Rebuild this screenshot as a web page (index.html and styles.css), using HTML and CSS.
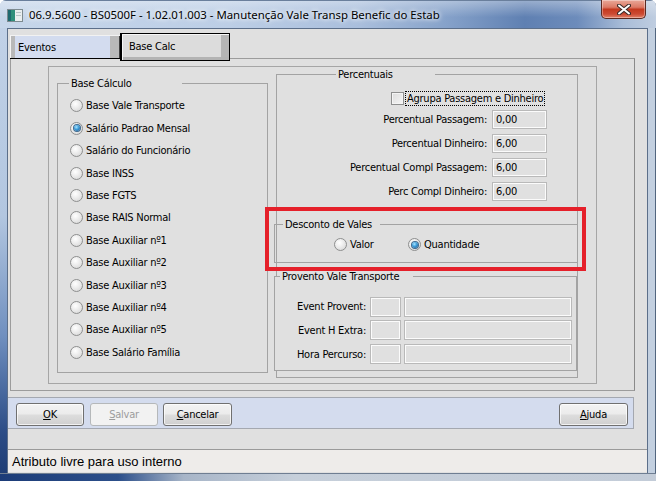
FILE: index.html
```html
<!DOCTYPE html>
<html lang="pt">
<head>
<meta charset="utf-8">
<title>Manutenção Vale Transp</title>
<link rel="stylesheet" href="styles.css">
</head>
<body>
<div class="window">
  <div class="titlebar">
    <svg class="app-icon" width="16" height="13" viewBox="0 0 16 13">
      <rect x="0.5" y="0.5" width="15" height="12" fill="#e9eef0" stroke="#7d8a90"/>
      <rect x="1" y="1" width="7" height="11" fill="#2f8f7c"/>
      <rect x="1" y="1" width="3" height="11" fill="#1f6a70"/>
      <rect x="9" y="3" width="5" height="1" fill="#b8c4c8"/>
      <rect x="9" y="6" width="5" height="1" fill="#b8c4c8"/>
    </svg>
    <span class="title">06.9.5600 - BS0500F - 1.02.01.003 - Manutenção Vale Transp Benefic do Estab</span>
    <div class="close">
      <svg width="14" height="11" viewBox="0 0 14 11">
        <path d="M2 1.5 L12 9.5 M12 1.5 L2 9.5" stroke="#3a2a28" stroke-width="4" stroke-linecap="round"/>
        <path d="M2 1.5 L12 9.5 M12 1.5 L2 9.5" stroke="#ffffff" stroke-width="2" stroke-linecap="round"/>
      </svg>
    </div>
  </div>
  <div class="frame-mid">
    <div class="client">
      <div class="tabs">
        <div class="tab tab-off">Eventos</div>
        <div class="tab tab-on">Base Calc</div>
      </div>
      <div class="tabpanel">
        <div class="inner">
          <fieldset class="grp grp-base">
            <legend>Base Cálculo</legend>
            <div class="radio-list">
              <div class="radio"><span class="rb"></span>Base Vale Transporte</div>
              <div class="radio"><span class="rb on"></span>Salário Padrao Mensal</div>
              <div class="radio"><span class="rb"></span>Salário do Funcionário</div>
              <div class="radio"><span class="rb"></span>Base INSS</div>
              <div class="radio"><span class="rb"></span>Base FGTS</div>
              <div class="radio"><span class="rb"></span>Base RAIS Normal</div>
              <div class="radio"><span class="rb"></span>Base Auxiliar nº1</div>
              <div class="radio"><span class="rb"></span>Base Auxiliar nº2</div>
              <div class="radio"><span class="rb"></span>Base Auxiliar nº3</div>
              <div class="radio"><span class="rb"></span>Base Auxiliar nº4</div>
              <div class="radio"><span class="rb"></span>Base Auxiliar nº5</div>
              <div class="radio"><span class="rb"></span>Base Salário Família</div>
            </div>
          </fieldset>
          <fieldset class="grp grp-perc">
            <legend>Percentuais</legend>
            <div class="chk-row"><span class="cb"></span><span class="chk-label">Agrupa Passagem e Dinheiro</span></div>
            <div class="prow"><span class="plabel">Percentual Passagem:</span><span class="field pinput">0,00</span></div>
            <div class="prow"><span class="plabel">Percentual Dinheiro:</span><span class="field pinput">6,00</span></div>
            <div class="prow"><span class="plabel">Percentual Compl Passagem:</span><span class="field pinput">6,00</span></div>
            <div class="prow"><span class="plabel">Perc Compl Dinheiro:</span><span class="field pinput">6,00</span></div>
            <div class="highlight">
              <fieldset class="grp grp-desc">
                <legend>Desconto de Vales</legend>
                <div class="desc-row">
                  <div class="radio opt-valor"><span class="rb"></span>Valor</div>
                  <div class="radio"><span class="rb on"></span>Quantidade</div>
                </div>
              </fieldset>
            </div>
            <fieldset class="grp grp-prov">
              <legend>Provento Vale Transporte</legend>
              <div class="vrow"><span class="vlabel">Event Provent:</span><span class="field vsmall"></span><span class="field vbig"></span></div>
              <div class="vrow"><span class="vlabel">Event H Extra:</span><span class="field vsmall"></span><span class="field vbig"></span></div>
              <div class="vrow"><span class="vlabel">Hora Percurso:</span><span class="field vsmall"></span><span class="field vbig"></span></div>
            </fieldset>
          </fieldset>
        </div>
      </div>
      <div class="buttonbar">
        <button class="btn"><u>O</u>K</button>
        <button class="btn disabled"><u>S</u>alvar</button>
        <button class="btn"><u>C</u>ancelar</button>
        <button class="btn help"><u>A</u>juda</button>
      </div>
      <div class="statusbar">Atributo livre para uso interno</div>
    </div>
  </div>
  <div class="frame-bottom"></div>
</div>
</body>
</html>
```

FILE: styles.css
```css
* { box-sizing: border-box; }
html, body { margin: 0; padding: 0; }
body {
  width: 656px;
  height: 481px;
  overflow: hidden;
  background: #ffffff;
  font-family: "DejaVu Sans Condensed", "Liberation Sans", sans-serif;
  font-size: 11px;
  letter-spacing: -0.25px;
  color: #000;
}

.window {
  width: 656px;
  height: 481px;
  display: flex;
  flex-direction: column;
  border-radius: 6px 6px 0 0;
  overflow: hidden;
  background:
    linear-gradient(to right, transparent 0 648px, #c3d0e0 648px 655px, #52667f 655px),
    linear-gradient(to bottom, #c3d3e8 0%, #b2c6e0 45%, #6f8fbf 70%, #2b4c86 90%, #1d3b72 100%);
}

/* title bar */
.titlebar {
  height: 28px;
  display: flex;
  align-items: center;
  flex: none;
  letter-spacing: 0;
  background:
    linear-gradient(to bottom, rgba(255,255,255,0.35), rgba(255,255,255,0) 60%),
    linear-gradient(to right, #c6d6ea 0%, #bccee6 35%, #a9bedc 55%, #86a2ca 68%, #5f80b2 80%, #6d8cbb 88%, #a9bdd8 95%, #bfcde0 100%);
  border-top: 1px solid #6a7f9c;
}
.app-icon { margin-left: 7px; margin-top: 2px; flex: none; }
.title {
  margin-left: 6px;
  font-family: "Noto Sans", "Open Sans", "Liberation Sans", sans-serif;
  font-size: 11.4px;
  color: #000;
  text-shadow: 0 0 4px #fff, 0 0 6px rgba(255,255,255,0.9);
  white-space: nowrap;
}
.close {
  margin-left: auto;
  margin-right: 10px;
  align-self: flex-start;
  margin-top: -1px;
  width: 45px;
  height: 19px;
  border: 1px solid #5b2a22;
  border-top: none;
  border-radius: 0 0 5px 5px;
  background: linear-gradient(to bottom, #e9a898 0%, #dc7a66 40%, #c4391f 52%, #cc4a33 78%, #e2826a 100%);
  display: flex;
  align-items: center;
  justify-content: center;
  box-shadow: inset 0 0 0 1px rgba(255,255,255,0.35);
}

.frame-mid {
  flex: 1;
  display: flex;
  padding-left: 7px;
  padding-right: 8px;
  min-height: 0;
}
.client {
  flex: 1;
  border: 1px solid #5c6f8a;
  border-bottom: none;
  background: #e0e0e0;
  display: flex;
  flex-direction: column;
}
.frame-bottom {
  height: 8px;
  flex: none;
  background: linear-gradient(to right, #1c3c78 0%, #2c4f8a 18%, #a7b5c8 28%, #c6cfda 45%, #c3ccd8 100%);
  border-top: 1px solid #6f7e92;
}

/* tabs */
.tabs {
  height: 30px;
  display: flex;
  align-items: flex-end;
  padding-left: 2px;
  flex: none;
}
.tab {
  position: relative;
  z-index: 1;
  display: flex;
  align-items: center;
}
.tab-off {
  width: 110px;
  height: 24px;
  padding-left: 8px;
  background: linear-gradient(to right, #f4f4f4 0 1px, #b9b9b9 1px 5px, #d3dcef 5px 100px, #b9b9b9 100px 109px, #404040 109px);
  border-top: 1px solid #f2f2f2;
  border-bottom: 1px solid #000;
}
.tab-on {
  width: 110px;
  height: 28px;
  margin-bottom: -2px;
  padding-left: 7px;
  padding-bottom: 2px;
  border: 1px solid #000;
  border-left-width: 2px;
  background:
    linear-gradient(to top, #b3b3b3 0 3px, transparent 3px),
    linear-gradient(to right, #dcdcdc 0 99px, #b5b5b5 99px);
  box-shadow: inset 1px 1px 0 #f6f6f6;
}

.tabpanel {
  width: 625px;
  height: 333px;
  margin-left: 2px;
  margin-top: -1px;
  border: 1px solid #9c9c9c;
  border-right-color: #8a8a8a;
  flex: none;
}
.inner {
  width: 549px;
  height: 318px;
  margin: 7px 0 0 37px;
  border: 1px solid #a6a6a6;
  display: flex;
  align-items: flex-start;
}

/* group boxes */
fieldset.grp {
  margin: 0;
  padding: 0;
  min-width: 0;
  border: 1px solid #a3a3a3;
}
fieldset.grp legend {
  padding: 0 0 0 2px;
  font-size: 11px;
  line-height: 13px;
  height: 13px;
}

fieldset.grp-base {
  width: 211px;
  height: 296px;
  margin: 10px 0 0 8px;
}
.grp-base legend { width: 113px; margin-left: 11px; }
.radio-list { padding-top: 4.8px; }
.radio {
  display: flex;
  align-items: center;
  height: 22.4px;
  padding-left: 12px;
  white-space: nowrap;
}
.rb {
  width: 13px;
  height: 13px;
  border-radius: 50%;
  border: 1px solid #8e8f8f;
  background: radial-gradient(circle at 40% 35%, #ffffff 0%, #f0f0f0 35%, #d2d2d2 100%);
  margin-right: 3px;
  flex: none;
  display: flex;
  align-items: center;
  justify-content: center;
}
.rb.on::after {
  content: "";
  width: 6px;
  height: 6px;
  border-radius: 50%;
  background: radial-gradient(circle at 40% 35%, #a9e4ff 0%, #3b9bd8 45%, #1a4f86 100%);
  box-shadow: 0 0 0 1px #3f6a8f;
}

fieldset.grp-perc {
  width: 302px;
  height: 310px;
  margin: 1px 0 0 8px;
}
.grp-perc > legend { width: 99px; margin-left: 59px; }
.chk-row {
  display: flex;
  align-items: center;
  height: 14px;
  margin-top: 10px;
  margin-left: 114px;
}
.cb {
  width: 13px;
  height: 13px;
  border: 1px solid #8e8f8f;
  background: linear-gradient(135deg, #dcdcdc, #f6f6f6);
  box-shadow: inset 0 0 0 1px #f4f4f4;
  flex: none;
}
.chk-label {
  margin-left: 2px;
  padding: 0 1px;
  outline: 1px dotted #000;
  line-height: 13px;
  white-space: nowrap;
}
.prow {
  display: flex;
  align-items: center;
  height: 23.8px;
}
.chk-row + .prow { margin-top: 2.8px; }
.plabel { width: 210px; text-align: right; white-space: nowrap; }
.field {
  display: flex;
  align-items: center;
  border: 1px solid #b9b9b9;
  box-shadow: inset 0 0 0 1px #fbfbfb;
  background: #e0e0e0;
  padding-left: 3px;
}
.pinput { width: 55px; height: 19px; margin-left: 5px; }

.highlight {
  position: relative;
  width: 321px;
  height: 64px;
  margin: 3.9px 0 0 -12px;
  border: 4px solid #e5202a;
  padding: 7px 0 0 5px;
}
fieldset.grp-desc { width: 304px; height: 45px; }
.grp-desc legend { width: 97px; margin-left: 8px; }
.desc-row {
  display: flex;
  align-items: center;
  height: 14px;
  margin-top: 7px;
  padding-left: 59px;
}
.desc-row .radio { padding-left: 0; height: 14px; }
.opt-valor { width: 74px; }

fieldset.grp-prov {
  position: relative;
  width: 303px;
  height: 101px;
  margin: -1px 0 0 -3px;
  background: #e0e0e0;
}
.grp-prov legend { width: 133px; margin-left: 5px; }
.vrow {
  display: flex;
  align-items: center;
  height: 23.8px;
}
.vrow:first-of-type { margin-top: 11.8px; }
.vlabel { width: 91px; text-align: right; white-space: nowrap; }
.vsmall { width: 31px; height: 20px; margin-left: 4px; }
.vbig { width: 168px; height: 20px; margin-left: 3px; }

/* buttons */
.buttonbar {
  width: 626px;
  height: 32px;
  margin-top: 6px;
  background: #d4dcee;
  border: 1px solid #a4a8b0;
  border-left: none;
  display: flex;
  align-items: flex-start;
  padding: 5px 5px 0 8px;
  flex: none;
}
.btn {
  font: inherit;
  letter-spacing: inherit;
  color: #000;
  width: 68px;
  height: 23px;
  margin: 0 6px 0 0;
  padding: 0;
  border: 1px solid #707070;
  border-radius: 3px;
  background: linear-gradient(to bottom, #f3f3f3 0%, #ebebeb 48%, #dddddd 52%, #cfcfcf 100%);
  box-shadow: inset 0 0 0 1px rgba(255,255,255,0.7);
  display: flex;
  align-items: center;
  justify-content: center;
}
.btn u { text-decoration-thickness: 1px; text-underline-offset: 1px; }
.btn.disabled {
  border-color: #b5b8ba;
  background: #f2f2f2;
  color: #9c9c9c;
  box-shadow: none;
}
.btn:nth-child(3) { width: 69px; margin-left: -1px; }
.btn.help { margin-left: auto; margin-right: 0; width: 69px; }

.statusbar {
  height: 23px;
  margin-top: 20px;
  border-top: 1px solid #9a9a9a;
  background: #eeecea;
  padding-left: 4px;
  display: flex;
  align-items: center;
  font-family: "Liberation Sans", sans-serif;
  font-size: 13px;
  letter-spacing: 0;
  flex: none;
}
```
